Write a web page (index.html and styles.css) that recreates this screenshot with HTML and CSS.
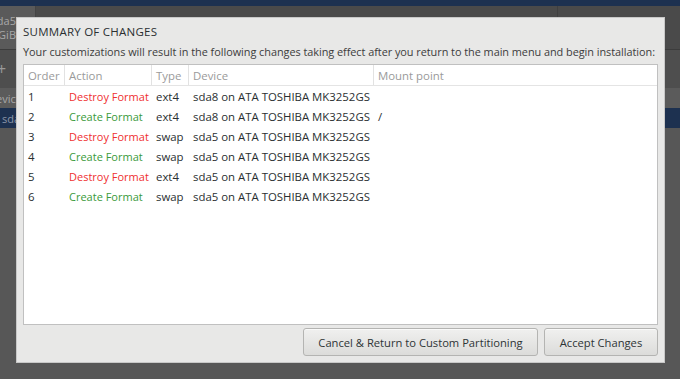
FILE: index.html
```html
<!DOCTYPE html>
<html>
<head>
<meta charset="utf-8">
<link rel="stylesheet" href="styles.css">
</head>
<body>
<div class="backdrop">
  <div class="bd-top"></div>
  <div class="bd-head">
    <div class="bd-disk"><span>sda5</span><span>5 GiB</span></div>
    <div class="bd-mid"></div>
    <div class="bd-right"></div>
  </div>
  <div class="bd-tools"><span class="bd-plus">+</span></div>
  <div class="bd-group"><span>Devices</span></div>
  <div class="bd-sel"><span>sda5</span></div>
</div>

<div class="dialog">
  <div class="title">SUMMARY OF CHANGES</div>
  <div class="subtitle">Your customizations will result in the following changes taking effect after you return to the main menu and begin installation:</div>
  <div class="table">
    <div class="row head">
      <div class="c c-order">Order</div>
      <div class="c c-action">Action</div>
      <div class="c c-type">Type</div>
      <div class="c c-dev">Device</div>
      <div class="c c-mount">Mount point</div>
    </div>
    <div class="row">
      <div class="c c-order">1</div>
      <div class="c c-action destroy">Destroy Format</div>
      <div class="c c-type">ext4</div>
      <div class="c c-dev">sda8 on ATA TOSHIBA MK3252GS</div>
      <div class="c c-mount"></div>
    </div>
    <div class="row">
      <div class="c c-order">2</div>
      <div class="c c-action create">Create Format</div>
      <div class="c c-type">ext4</div>
      <div class="c c-dev">sda8 on ATA TOSHIBA MK3252GS</div>
      <div class="c c-mount">/</div>
    </div>
    <div class="row">
      <div class="c c-order">3</div>
      <div class="c c-action destroy">Destroy Format</div>
      <div class="c c-type">swap</div>
      <div class="c c-dev">sda5 on ATA TOSHIBA MK3252GS</div>
      <div class="c c-mount"></div>
    </div>
    <div class="row">
      <div class="c c-order">4</div>
      <div class="c c-action create">Create Format</div>
      <div class="c c-type">swap</div>
      <div class="c c-dev">sda5 on ATA TOSHIBA MK3252GS</div>
      <div class="c c-mount"></div>
    </div>
    <div class="row">
      <div class="c c-order">5</div>
      <div class="c c-action destroy">Destroy Format</div>
      <div class="c c-type">ext4</div>
      <div class="c c-dev">sda5 on ATA TOSHIBA MK3252GS</div>
      <div class="c c-mount"></div>
    </div>
    <div class="row">
      <div class="c c-order">6</div>
      <div class="c c-action create">Create Format</div>
      <div class="c c-type">swap</div>
      <div class="c c-dev">sda5 on ATA TOSHIBA MK3252GS</div>
      <div class="c c-mount"></div>
    </div>
  </div>
  <div class="buttons">
    <button class="btn btn-cancel">Cancel &amp; Return to Custom Partitioning</button>
    <button class="btn btn-accept">Accept Changes</button>
  </div>
</div>
</body>
</html>
```

FILE: styles.css
```css
html, body {
  margin: 0;
  padding: 0;
}
body {
  width: 680px;
  height: 379px;
  overflow: hidden;
  background: #575757;
  font-family: "Open Sans", sans-serif;
  position: relative;
}

.backdrop {
  display: flex;
  flex-direction: column;
  color: #a8a8a8;
  font-size: 11px;
}
.bd-top {
  height: 6px;
  background: #1d3150;
}
.bd-head {
  height: 43px;
  display: flex;
  background: #4a4a4a;
  border-bottom: 1px solid #3c3c3c;
}
.bd-disk {
  width: 35px;
  border-right: 1px solid #444;
  background: #5a5a5a;
  display: flex;
  flex-direction: column;
  align-items: flex-end;
  padding-top: 8px;
  line-height: 14px;
  white-space: nowrap;
  overflow: hidden;
}
.bd-disk span { margin-right: 19px; }
.bd-mid {
  width: 521px;
  border-right: 1px solid #404040;
}
.bd-right { flex: 1; }
.bd-tools {
  height: 38px;
  background: #4e4e4e;
  display: flex;
  align-items: center;
  overflow: hidden;
}
.bd-plus {
  font-size: 16px;
  margin-left: -3px;
  color: #9a9a9a;
}
.bd-group {
  height: 20px;
  background: #5b5b5b;
  display: flex;
  align-items: center;
  white-space: nowrap;
  overflow: hidden;
}
.bd-group span { margin-left: -12px; }
.bd-sel {
  height: 20px;
  background: #1d3150;
  display: flex;
  align-items: center;
  color: #8a95a8;
  overflow: hidden;
}
.bd-sel span { margin-left: 2px; }

.dialog {
  position: absolute;
  left: 16px;
  top: 17px;
  width: 649px;
  height: 346px;
  background: #e8e8e7;
  box-sizing: border-box;
  border: 1px solid #c8c8c8;
  padding: 6px 6px 0 6px;
  display: flex;
  flex-direction: column;
  color: #2a2f31;
}
.title {
  font-size: 11.5px;
  letter-spacing: 0.25px;
  line-height: 16px;
  height: 16px;
}
.subtitle {
  font-size: 10.9px;
  letter-spacing: -0.04px;
  color: #3c3c3c;
  line-height: 16px;
  margin-top: 4px;
  white-space: nowrap;
}
.table {
  margin-top: 4px;
  height: 261px;
  background: #fff;
  border: 1px solid #c0c0c0;
  box-sizing: border-box;
  font-size: 11.4px;
}
.row {
  display: flex;
  height: 20px;
  align-items: center;
  white-space: nowrap;
}
.row.head {
  border-bottom: 1px solid #e4e4e4;
  color: #9a9a9a;
  align-items: stretch;
}
.row.head .c {
  border-right: 1px solid #e2e2e2;
  display: flex;
  align-items: center;
}
.row.head .c-mount { border-right: none; }
.c {
  box-sizing: border-box;
  padding-left: 4px;
}
.c-order { width: 41px; }
.c-action { width: 87px; }
.row:not(.head) .c-action { font-size: 11px; }
.c-type { width: 37px; }
.c-dev { width: 185px; }
.c-mount { flex: 1; }
.destroy { color: #ef2f2f; }
.create { color: #3a9a3a; }

.buttons {
  display: flex;
  justify-content: flex-end;
  gap: 6px;
  margin-top: 3px;
}
.btn {
  height: 28px;
  box-sizing: border-box;
  border: 1px solid #b4b4b2;
  border-radius: 3px;
  background: linear-gradient(#f0f0ef, #dcdcda);
  font-family: "Open Sans", sans-serif;
  font-size: 11.2px;
  color: #2e3436;
  padding: 0;
  box-shadow: 0 1px 0 rgba(255,255,255,0.6) inset;
}
.btn-cancel { width: 235px; }
.btn-accept { width: 114px; }
```
